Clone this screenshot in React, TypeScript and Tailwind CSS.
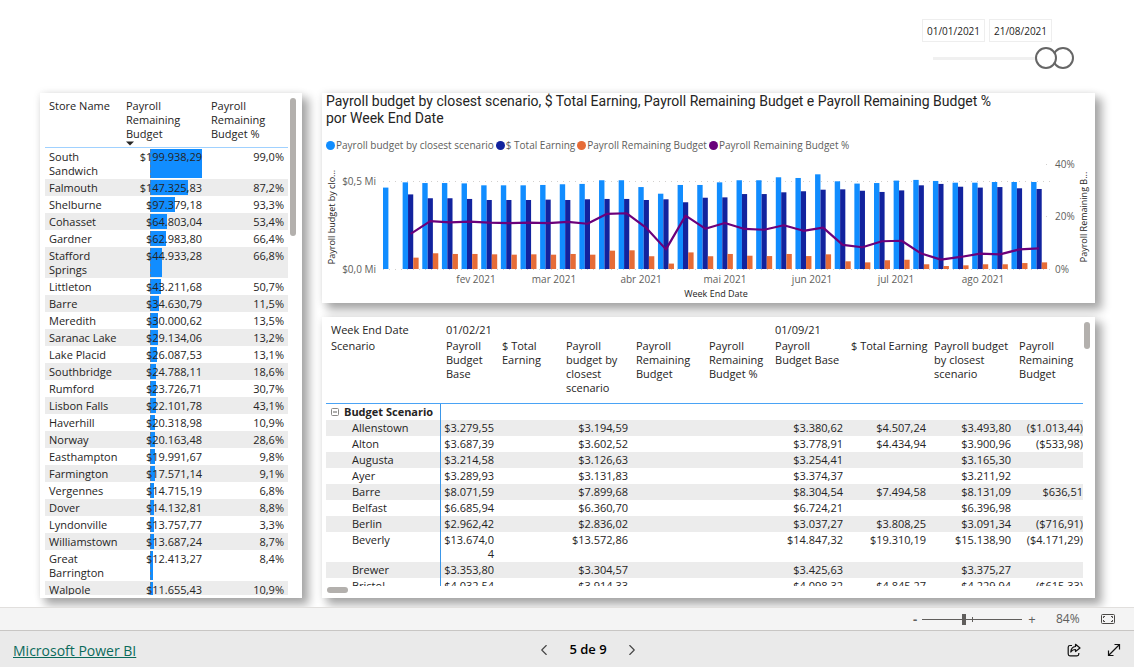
import { ChevronLeft, ChevronRight } from "lucide-react";

const stores = [
  { name: "South Sandwich", budget: 199938.29, label: "$199.938,29", pct: "99,0%" },
  { name: "Falmouth", budget: 147325.83, label: "$147.325,83", pct: "87,2%" },
  { name: "Shelburne", budget: 97379.18, label: "$97.379,18", pct: "93,3%" },
  { name: "Cohasset", budget: 64803.04, label: "$64.803,04", pct: "53,4%" },
  { name: "Gardner", budget: 62983.8, label: "$62.983,80", pct: "66,4%" },
  { name: "Stafford Springs", budget: 44933.28, label: "$44.933,28", pct: "66,8%" },
  { name: "Littleton", budget: 43211.68, label: "$43.211,68", pct: "50,7%" },
  { name: "Barre", budget: 34630.79, label: "$34.630,79", pct: "11,5%" },
  { name: "Meredith", budget: 30000.62, label: "$30.000,62", pct: "13,5%" },
  { name: "Saranac Lake", budget: 29134.06, label: "$29.134,06", pct: "13,2%" },
  { name: "Lake Placid", budget: 26087.53, label: "$26.087,53", pct: "13,1%" },
  { name: "Southbridge", budget: 24788.11, label: "$24.788,11", pct: "18,6%" },
  { name: "Rumford", budget: 23726.71, label: "$23.726,71", pct: "30,7%" },
  { name: "Lisbon Falls", budget: 22101.78, label: "$22.101,78", pct: "43,1%" },
  { name: "Haverhill", budget: 20318.98, label: "$20.318,98", pct: "10,9%" },
  { name: "Norway", budget: 20163.48, label: "$20.163,48", pct: "28,6%" },
  { name: "Easthampton", budget: 19991.67, label: "$19.991,67", pct: "9,8%" },
  { name: "Farmington", budget: 17571.14, label: "$17.571,14", pct: "9,1%" },
  { name: "Vergennes", budget: 14715.19, label: "$14.715,19", pct: "6,8%" },
  { name: "Dover", budget: 14132.81, label: "$14.132,81", pct: "8,8%" },
  { name: "Lyndonville", budget: 13757.77, label: "$13.757,77", pct: "3,3%" },
  { name: "Williamstown", budget: 13687.24, label: "$13.687,24", pct: "8,7%" },
  { name: "Great Barrington", budget: 12413.27, label: "$12.413,27", pct: "8,4%" },
  { name: "Walpole", budget: 11655.43, label: "$11.655,43", pct: "10,9%" },
];

const legend = [
  { label: "Payroll budget by closest scenario", dot: "bg-[#118dff]" },
  { label: "$ Total Earning", dot: "bg-[#12239e]" },
  { label: "Payroll Remaining Budget", dot: "bg-[#e66c37]" },
  { label: "Payroll Remaining Budget %", dot: "bg-[#6b007b]" },
];

// one entry per week, in thousands
const budget = [
  466, 496, 492, 492, 490, 479, 479, 479, 481, 485, 487, 508, 508, 469, 431, 481, 481, 496, 508, 508, 525, 521, 542,
  502, 489, 492, 506, 510, 504, 494, 494, 498, 498, 498,
];
const earning = [
  0, 427, 405, 405, 401, 395, 395, 395, 397, 395, 399, 401, 401, 395, 399, 382, 408, 410, 429, 429, 439, 445, 454, 456,
  448, 441, 450, 479, 487, 471, 466, 469, 462, 458,
];
const remaining = [
  0, 65, 90, 86, 86, 84, 82, 84, 82, 86, 82, 105, 107, 73, 31, 95, 73, 86, 76, 74, 86, 74, 84, 44, 38, 50, 53, 27, 17,
  21, 27, 27, 34, 38,
];
// percentages start in the second week
const remainingPct = [
  13.4, 18.3, 17.8, 18.1, 17.7, 17.5, 17.7, 17.5, 18, 17.3, 21.1, 21.3, 15.7, 7.5, 20.4, 15.4, 17.6, 15.3, 15, 16.7,
  14.6, 15.8, 9.2, 8.3, 10.6, 10.8, 5.9, 3.6, 4.6, 5.9, 5.6, 7.5, 7.9,
];

const months = [
  { label: "fev 2021", x: 154 },
  { label: "mar 2021", x: 232 },
  { label: "abr 2021", x: 319 },
  { label: "mai 2021", x: 403 },
  { label: "jun 2021", x: 490 },
  { label: "jul 2021", x: 574 },
  { label: "ago 2021", x: 661 },
];

const matrixColumns = [
  "Payroll\nBudget\nBase",
  "$ Total\nEarning",
  "Payroll\nbudget by\nclosest\nscenario",
  "Payroll\nRemaining\nBudget",
  "Payroll\nRemaining\nBudget %",
  "Payroll\nBudget Base",
  "$ Total Earning",
  "Payroll budget\nby closest\nscenario",
  "Payroll\nRemaining\nBudget",
];

const matrixRows = [
  { name: "Allenstown", cells: ["$3.279,55", "", "$3.194,59", "", "", "$3.380,62", "$4.507,24", "$3.493,80", "($1.013,44)"] },
  { name: "Alton", cells: ["$3.687,39", "", "$3.602,52", "", "", "$3.778,91", "$4.434,94", "$3.900,96", "($533,98)"] },
  { name: "Augusta", cells: ["$3.214,58", "", "$3.126,63", "", "", "$3.254,41", "", "$3.165,30", ""] },
  { name: "Ayer", cells: ["$3.289,93", "", "$3.131,83", "", "", "$3.374,37", "", "$3.211,92", ""] },
  { name: "Barre", cells: ["$8.071,59", "", "$7.899,68", "", "", "$8.304,54", "$7.494,58", "$8.131,09", "$636,51"] },
  { name: "Belfast", cells: ["$6.685,94", "", "$6.360,70", "", "", "$6.724,21", "", "$6.396,98", ""] },
  { name: "Berlin", cells: ["$2.962,42", "", "$2.836,02", "", "", "$3.037,27", "$3.808,25", "$3.091,34", "($716,91)"] },
  { name: "Beverly", cells: ["$13.674,04", "", "$13.572,86", "", "", "$14.847,32", "$19.310,19", "$15.138,90", "($4.171,29)"] },
  { name: "Brewer", cells: ["$3.353,80", "", "$3.304,57", "", "", "$3.425,63", "", "$3.375,27", ""] },
  { name: "Bristol", cells: ["$4.032,54", "", "$3.914,33", "", "", "$4.098,32", "$4.845,27", "$4.229,94", "($615,33)"] },
];

const card = "bg-white shadow-[6px_6px_9px_1px_rgba(0,0,0,0.33),0_0_8px_rgba(0,0,0,0.08)]";

const thumb =
  "[&::-webkit-slider-thumb]:pointer-events-auto [&::-webkit-slider-thumb]:size-[22px] [&::-webkit-slider-thumb]:appearance-none [&::-webkit-slider-thumb]:rounded-full [&::-webkit-slider-thumb]:border-2 [&::-webkit-slider-thumb]:border-[#666] [&::-webkit-slider-thumb]:bg-white";

function DateSlicer() {
  return (
    <div className="w-[152px]">
      <div className="flex gap-1">
        <input
          aria-label="Start date"
          defaultValue="01/01/2021"
          className="h-[23px] w-[63px] border border-[#eee] text-center text-[10px]"
        />
        <input
          aria-label="End date"
          defaultValue="21/08/2021"
          className="h-[23px] w-[63px] border border-[#eee] text-center text-[10px]"
        />
      </div>
      <div className="relative mt-[5px] ml-[11px] h-[22px]">
        <div className="absolute inset-x-0 top-[10px] h-[3px] bg-[#f0f0f0]" />
        <input
          type="range"
          aria-label="Range end"
          defaultValue={100}
          className={`pointer-events-none absolute inset-0 h-[22px] w-full appearance-none bg-transparent ${thumb}`}
        />
        <input
          type="range"
          aria-label="Range start"
          defaultValue={86}
          className={`pointer-events-none absolute inset-0 h-[22px] w-full appearance-none bg-transparent ${thumb}`}
        />
      </div>
    </div>
  );
}

function StoreTable() {
  return (
    <section className={`relative w-[262px] shrink-0 pt-[5px] pr-[14px] pb-[3px] pl-[5px] ${card}`}>
      <div className="h-full overflow-hidden">
        <table className="w-full table-fixed border-separate border-spacing-0 text-[11px] leading-[14px]">
          <colgroup>
            <col className="w-[76px]" />
            <col className="w-[86px]" />
            <col />
          </colgroup>
          <thead className="text-left align-top">
            <tr>
              <th className="border-b border-b-[#a0d1ff] px-1 pt-px font-normal">Store Name</th>
              <th className="border-b border-b-[#a0d1ff] px-[5px] pt-px pb-px font-normal">
                Payroll Remaining Budget
                <svg viewBox="0 0 8 4" className="h-[5px] w-2" fill="#252423">
                  <path d="M0 0h8L4 4z" />
                </svg>
              </th>
              <th className="border-b border-b-[#a0d1ff] px-1 pt-px font-normal">Payroll Remaining Budget %</th>
            </tr>
          </thead>
          <tbody className="align-top">
            {stores.map((store) => (
              <tr key={store.name} className="even:bg-[#ececec]">
                <td className="pt-[2px] pb-px pl-1">{store.name}</td>
                <td className="relative pt-[2px] pr-[5px] pb-px text-right">
                  <div
                    className="absolute inset-y-px left-[29px] border-l border-dashed border-[#5c7fa3] bg-[#118dff]"
                    style={{ width: Math.max(3, (store.budget / 199938.29) * 52) }}
                  />
                  <span className="relative">{store.label}</span>
                </td>
                <td className="pt-[2px] pr-1 pb-px text-right">{store.pct}</td>
              </tr>
            ))}
          </tbody>
        </table>
      </div>
      <div className="absolute top-[5px] right-[6px] h-[138px] w-[6px] rounded-full bg-[#b3b0ad]" />
    </section>
  );
}

function PayrollChart() {
  const base = 114;
  const left = (i: number) => 61 + i * 19.64;
  const height = (v: number) => v * 0.1747;
  const line = remainingPct.map((p, i) => `${left(i + 1) + 8},${base - p * 2.617}`).join(" ");

  return (
    <section className={`flex flex-col ${card}`}>
      <h2 className="px-1 font-[Roboto] text-[14px] leading-[17px]">
        Payroll budget by closest scenario, $ Total Earning, Payroll Remaining Budget e Payroll Remaining Budget %
        <br />
        por Week End Date
      </h2>
      <ul className="mt-[10px] flex gap-0.5 px-1 text-[10px] leading-4 text-[#605e5c]">
        {legend.map((item) => (
          <li key={item.label} className="flex items-center gap-px whitespace-nowrap">
            <span className={`size-[9px] rounded-full ${item.dot}`} />
            {item.label}
          </li>
        ))}
      </ul>
      <svg viewBox="0 0 773 148" className="mt-[2px] w-full" fontSize="10" fill="#605e5c">
        <g stroke="#d2d0ce" strokeDasharray="1 5">
          <path d="M61 26.5H728M61 114.5H728M724 9.5h2M724 61.5h2" />
        </g>
        {budget.map((v, i) => (
          <g key={i}>
            <rect x={left(i)} y={base - height(v)} width="5.4" height={height(v)} fill="#118dff" />
            <rect x={left(i) + 5.4} y={base - height(earning[i])} width="5.2" height={height(earning[i])} fill="#12239e" />
            <rect x={left(i) + 10.6} y={base - height(remaining[i])} width="5.4" height={height(remaining[i])} fill="#e66c37" />
          </g>
        ))}
        <polyline points={line} fill="none" stroke="#6b007b" strokeWidth="2.2" strokeLinejoin="round" />
        <text x="54" y="30" textAnchor="end">$0,5 Mi</text>
        <text x="54" y="118" textAnchor="end">$0,0 Mi</text>
        <text x="733" y="13">40%</text>
        <text x="733" y="65">20%</text>
        <text x="733" y="118">0%</text>
        {months.map((m) => (
          <text key={m.label} x={m.x} y="128" textAnchor="middle">
            {m.label}
          </text>
        ))}
        <g fontSize="9" fill="#252423" textAnchor="middle">
          <text x="394" y="142">Week End Date</text>
          <text transform="translate(13 62) rotate(-90)">Payroll budget by clo...</text>
          <text transform="translate(765 62) rotate(-90)">Payroll Remaining B...</text>
        </g>
      </svg>
    </section>
  );
}

function ScenarioMatrix() {
  return (
    <section className={`relative min-h-0 flex-1 pt-1 pr-3 pb-3 pl-1 ${card}`}>
      <div className="h-full overflow-hidden">
        <table className="w-full table-fixed border-separate border-spacing-0 text-[11px] leading-[14px]">
          <colgroup>
            <col className="w-[115px]" />
            <col className="w-[56px]" />
            <col className="w-[64px]" />
            <col className="w-[70px]" />
            <col className="w-[73px]" />
            <col className="w-[66px]" />
            <col className="w-[76px]" />
            <col className="w-[83px]" />
            <col className="w-[85px]" />
            <col />
          </colgroup>
          <thead className="text-left align-top">
            <tr>
              <th className="pt-[2px] pl-[5px] font-normal">Week End Date</th>
              <th colSpan={5} className="pt-[2px] pl-[5px] font-normal">01/02/21</th>
              <th colSpan={4} className="pt-[2px] pl-[5px] font-normal">01/09/21</th>
            </tr>
            <tr>
              <th className="h-[67px] border-b border-b-[#4aa3f5] pt-[2px] pl-[5px] font-normal">Scenario</th>
              {matrixColumns.map((column, i) => (
                <th key={i} className="h-[67px] border-b border-b-[#4aa3f5] pt-[2px] pl-[5px] font-normal whitespace-pre">
                  {column}
                </th>
              ))}
            </tr>
          </thead>
          <tbody className="align-top">
            <tr>
              <th className="border-r border-r-[#3a96e8] py-px pl-[5px] text-left font-bold">
                <button className="flex items-center gap-[5px] whitespace-nowrap">
                  <svg viewBox="0 0 8 8" className="size-2" fill="none" stroke="#8a8886">
                    <rect x="0.5" y="0.5" width="7" height="7" rx="1" />
                    <path d="M2 4h4" stroke="#605e5c" />
                  </svg>
                  Budget Scenario
                </button>
              </th>
              <td colSpan={9} />
            </tr>
            {matrixRows.map((row) => (
              <tr key={row.name} className="even:bg-[#ececec]">
                <th className="border-r border-r-[#3a96e8] py-px pl-[26px] text-left font-normal">{row.name}</th>
                {row.cells.map((cell, i) => (
                  <td key={i} className="py-px pr-[3px] text-right break-all last:pr-0">
                    {cell}
                  </td>
                ))}
              </tr>
            ))}
          </tbody>
        </table>
      </div>
      <div className="absolute top-[5px] right-[5px] h-[27px] w-[6px] rounded-full bg-[#b3b0ad]" />
      <div className="absolute bottom-[5px] left-[5px] h-[6px] w-[21px] rounded-full bg-[#b3b0ad]" />
    </section>
  );
}

function ZoomBar() {
  return (
    <div className="flex h-[23px] items-center border-t border-[#e1dfdd] bg-[#f4f4f4] pr-[19px] text-[#605e5c]">
      <button aria-label="Zoom out" className="mr-[5px] ml-auto h-4 w-1 text-[13px] leading-4 font-bold">
        -
      </button>
      <div className="relative flex h-3 w-[100px] items-center">
        <div className="absolute inset-x-0 top-[6px] h-px bg-[#605e5c]" />
        <div className="absolute top-1 left-[50px] h-[5px] w-px bg-[#605e5c]" />
        <input
          type="range"
          aria-label="Zoom"
          min={0}
          max={200}
          defaultValue={84}
          className="relative h-3 w-full appearance-none bg-transparent [&::-webkit-slider-thumb]:h-[11px] [&::-webkit-slider-thumb]:w-1 [&::-webkit-slider-thumb]:appearance-none [&::-webkit-slider-thumb]:bg-[#605e5c]"
        />
      </div>
      <button aria-label="Zoom in" className="ml-[6px] h-4 w-2 text-[13px] leading-4">
        +
      </button>
      <span className="ml-5 w-6 text-[12px] leading-4 whitespace-nowrap">84%</span>
      <button aria-label="Fit to page" className="ml-[21px]">
        <svg viewBox="0 0 14 10" className="h-[10px] w-[14px]" fill="none" stroke="#4a4846">
          <rect x="0.5" y="0.5" width="13" height="9" rx="1" />
          <path d="M2.5 4V2.5H4M10 2.5h1.5V4M11.5 6v1.5H10M4 7.5H2.5V6" />
        </svg>
      </button>
    </div>
  );
}

function Footer() {
  return (
    <footer className="grid h-[37px] grid-cols-[1fr_auto_1fr] items-center border-t border-[#c8c6c4] bg-[#eaeaea] px-[13px] pt-[2px]">
      <a href="#" className="justify-self-start text-[14px] text-[#0b6a5b] underline">
        Microsoft Power BI
      </a>
      <nav className="flex items-center gap-4 pl-[42px] text-black">
        <button aria-label="Previous page">
          <ChevronLeft className="size-[18px] text-[#444]" strokeWidth={1.5} />
        </button>
        <span className="text-[13px] font-semibold">5 de 9</span>
        <button aria-label="Next page">
          <ChevronRight className="size-[18px] text-[#444]" strokeWidth={1.5} />
        </button>
      </nav>
      <div className="flex items-center gap-[26px] justify-self-end">
        <button aria-label="Share">
          <svg viewBox="0 0 14 14" className="size-[14px]" fill="none" stroke="#111" strokeWidth="1.2" strokeLinejoin="round">
            <path d="M5 2.5H3A1.8 1.8 0 0 0 1.2 4.3V11A1.8 1.8 0 0 0 3 12.8h7A1.8 1.8 0 0 0 11.8 11v-1" />
            <path d="M8.5 1.3 13 5 8.5 8.5V6.5C6.2 6.5 4.8 7.3 3.8 9c.2-3.3 1.8-5.2 4.7-5.5z" />
          </svg>
        </button>
        <button aria-label="Full screen">
          <svg viewBox="0 0 14 14" className="size-[14px]" fill="none" stroke="#111" strokeWidth="1.2">
            <path d="M1.5 12.5 12.5 1.5M7.5 1.5h5v5M1.5 7.5v5h5" />
          </svg>
        </button>
      </div>
    </footer>
  );
}

export default function App() {
  return (
    <div className="flex h-screen flex-col bg-white font-['Open_Sans',sans-serif] text-[#252423]">
      <main className="flex min-h-0 flex-1 flex-col overflow-hidden pr-[39px] pb-[9px] pl-10">
        <div className="flex h-[93px] shrink-0 justify-end pt-[19px] pr-[21px]">
          <DateSlicer />
        </div>
        <div className="flex min-h-0 flex-1 gap-5">
          <StoreTable />
          <div className="flex min-w-0 flex-1 flex-col gap-[14px]">
            <PayrollChart />
            <ScenarioMatrix />
          </div>
        </div>
      </main>
      <ZoomBar />
      <Footer />
    </div>
  );
}
